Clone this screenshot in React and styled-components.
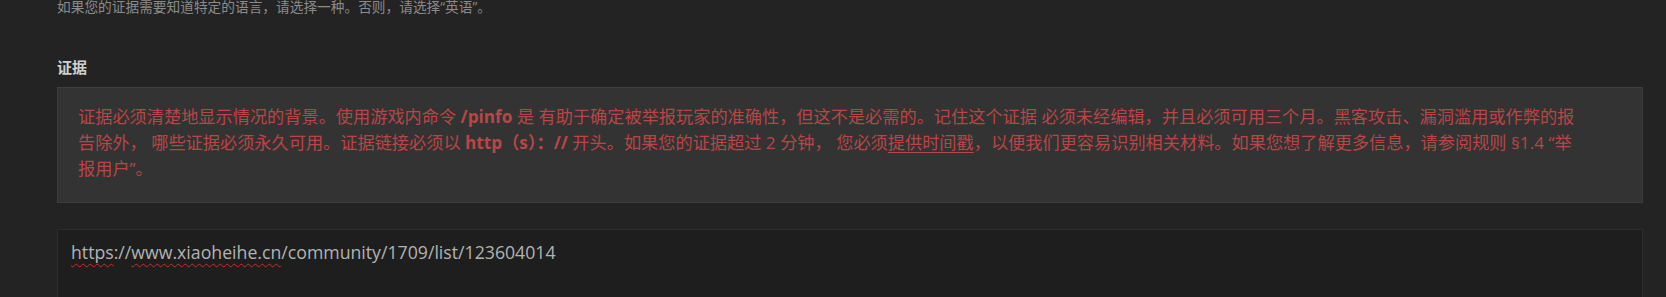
import React from "react";
import styled, { createGlobalStyle } from "styled-components";

const GlobalStyle = createGlobalStyle`
  html, body {
    margin: 0;
    padding: 0;
    background: #232323;
  }
  body {
    font-family: "Open Sans", "Noto Sans CJK SC", sans-serif;
    overflow: hidden;
  }
`;

const Page = styled.div`
  width: 1666px;
  height: 297px;
  overflow: hidden;
  background: #232323;
`;

const Column = styled.div`
  width: 1586px;
  margin-left: 57px;
  margin-top: -4px;
  display: flex;
  flex-direction: column;
`;

const Hint = styled.p`
  margin: 0;
  font-family: "Open Sans", "Noto Sans CJK SC", sans-serif;
  font-size: 13.7px;
  line-height: 22px;
  color: #8b8b8b;
`;

const Label = styled.h3`
  margin: 39px 0 0;
  font-family: "Noto Sans CJK SC", sans-serif;
  font-size: 15px;
  font-weight: 700;
  line-height: 20px;
  color: #cfcfcf;
`;

const Notice = styled.div`
  margin-top: 10px;
  box-sizing: border-box;
  height: 116px;
  padding: 16px 62px 0 20px;
  background: #333333;
  border: 1px solid #3e3e3e;
  font-family: "Open Sans", "Noto Sans CJK SC", sans-serif;
  font-size: 17.2px;
  line-height: 26px;
  color: #b84647;
`;

const Strong = styled.b`
  font-weight: 700;
`;

const Underlined = styled.span`
  text-decoration: underline;
  text-underline-offset: 3px;
`;

const Input = styled.div`
  margin-top: 26px;
  box-sizing: border-box;
  height: 80px;
  padding: 10px 13px;
  background: #1e1e1e;
  border: 1px solid #2d2d2d;
  border-bottom: none;
  font-family: "Open Sans", sans-serif;
  font-size: 17.7px;
  line-height: 24px;
  color: #b3b3b3;
`;

const Misspelled = styled.span`
  text-decoration: underline wavy #d02a2a;
  text-decoration-thickness: 1px;
  text-underline-offset: 4px;
`;

export default function App() {
  return (
    <Page>
      <GlobalStyle />
      <Column>
        <Hint>如果您的证据需要知道特定的语言，请选择一种。否则，请选择“英语”。</Hint>
        <Label>证据</Label>
        <Notice>
          证据必须清楚地显示情况的背景。使用游戏内命令 <Strong>/pinfo</Strong> 是
          有助于确定被举报玩家的准确性，但这不是必需的。记住这个证据
          必须未经编辑，并且必须可用三个月。黑客攻击、漏洞滥用或作弊的报告除外，
          哪些证据必须永久可用。证据链接必须以 <Strong>http（s）：//</Strong>{" "}
          开头。如果您的证据超过 2 分钟， 您必须<Underlined>提供时间戳</Underlined>，以便我们更容易识别相关材料。如果您想了解更多信息，请参阅规则 §1.4 “举报用户”。
        </Notice>
        <Input>
          <Misspelled>https</Misspelled>://<Misspelled>www.xiaoheihe.cn</Misspelled>
          /community/1709/list/123604014
        </Input>
      </Column>
    </Page>
  );
}
